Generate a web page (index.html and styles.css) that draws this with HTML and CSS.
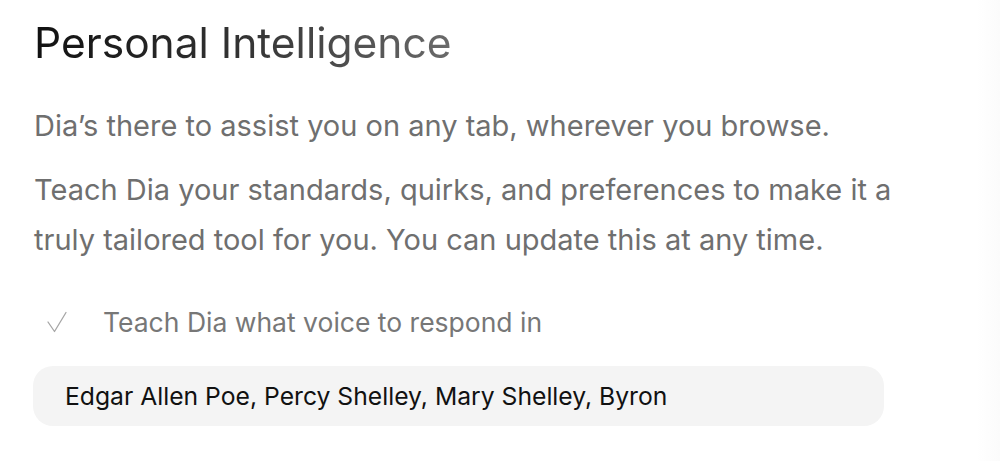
FILE: index.html
```html
<!DOCTYPE html>
<html>
<head>
<meta charset="utf-8">
<link rel="stylesheet" href="styles.css">
</head>
<body>
<div class="page">
  <main class="content">
    <h1 class="title">Personal Intelligence</h1>
    <p class="lead">Dia’s there to assist you on any tab, wherever you browse.</p>
    <p class="lead">Teach Dia your standards, quirks, and preferences to make it a truly tailored tool for you. You can update this at any time.</p>
    <div class="step">
      <svg class="check" width="20" height="22" viewBox="0 0 20 22"><path d="M1 11 L7.5 20.5 L19 1.5" fill="none" stroke="#a6a6a6" stroke-width="1.3" stroke-linecap="round" stroke-linejoin="round"/></svg>
      <span class="step-label">Teach Dia what voice to respond in</span>
    </div>
    <div class="field">Edgar Allen Poe, Percy Shelley, Mary Shelley, Byron</div>
  </main>
  <div class="edge"></div>
</div>
</body>
</html>
```

FILE: styles.css
```css
html, body {
  margin: 0;
  padding: 0;
  background: #ffffff;
}
body {
  font-family: Inter, "Liberation Sans", sans-serif;
  width: 1000px;
  height: 461px;
  overflow: hidden;
}
.page {
  display: flex;
  height: 461px;
}
.content {
  flex: 1;
  padding: 16px 0 0 34px;
}
.edge {
  width: 24px;
  background: linear-gradient(90deg, #ffffff, #fbfbfb);
}
.title {
  margin: 0;
  font-size: 42.5px;
  font-weight: 400;
  line-height: 54px;
  display: inline-block;
  background: linear-gradient(90deg, #111111 0%, #333333 50%, #6a6a6a 100%);
  -webkit-background-clip: text;
  background-clip: text;
  color: transparent;
}
.lead {
  margin: 0;
  font-size: 29px;
  line-height: 50px;
  color: #6f6f6f;
  width: 880px;
}
.title + .lead {
  margin-top: 31px;
}
.lead + .lead {
  margin-top: 14px;
}
.step {
  display: flex;
  align-items: center;
  gap: 36px;
  margin-top: 42px;
  padding-left: 13px;
  height: 30px;
}
.check {
  display: block;
}
.step-label {
  font-size: 26.5px;
  color: #777777;
}
.field {
  margin-top: 29px;
  margin-left: -1px;
  width: 851px;
  height: 60px;
  box-sizing: border-box;
  border-radius: 20px;
  background: #f4f4f4;
  padding-left: 32px;
  display: flex;
  align-items: center;
  font-size: 24.7px;
  color: #111111;
}
```
